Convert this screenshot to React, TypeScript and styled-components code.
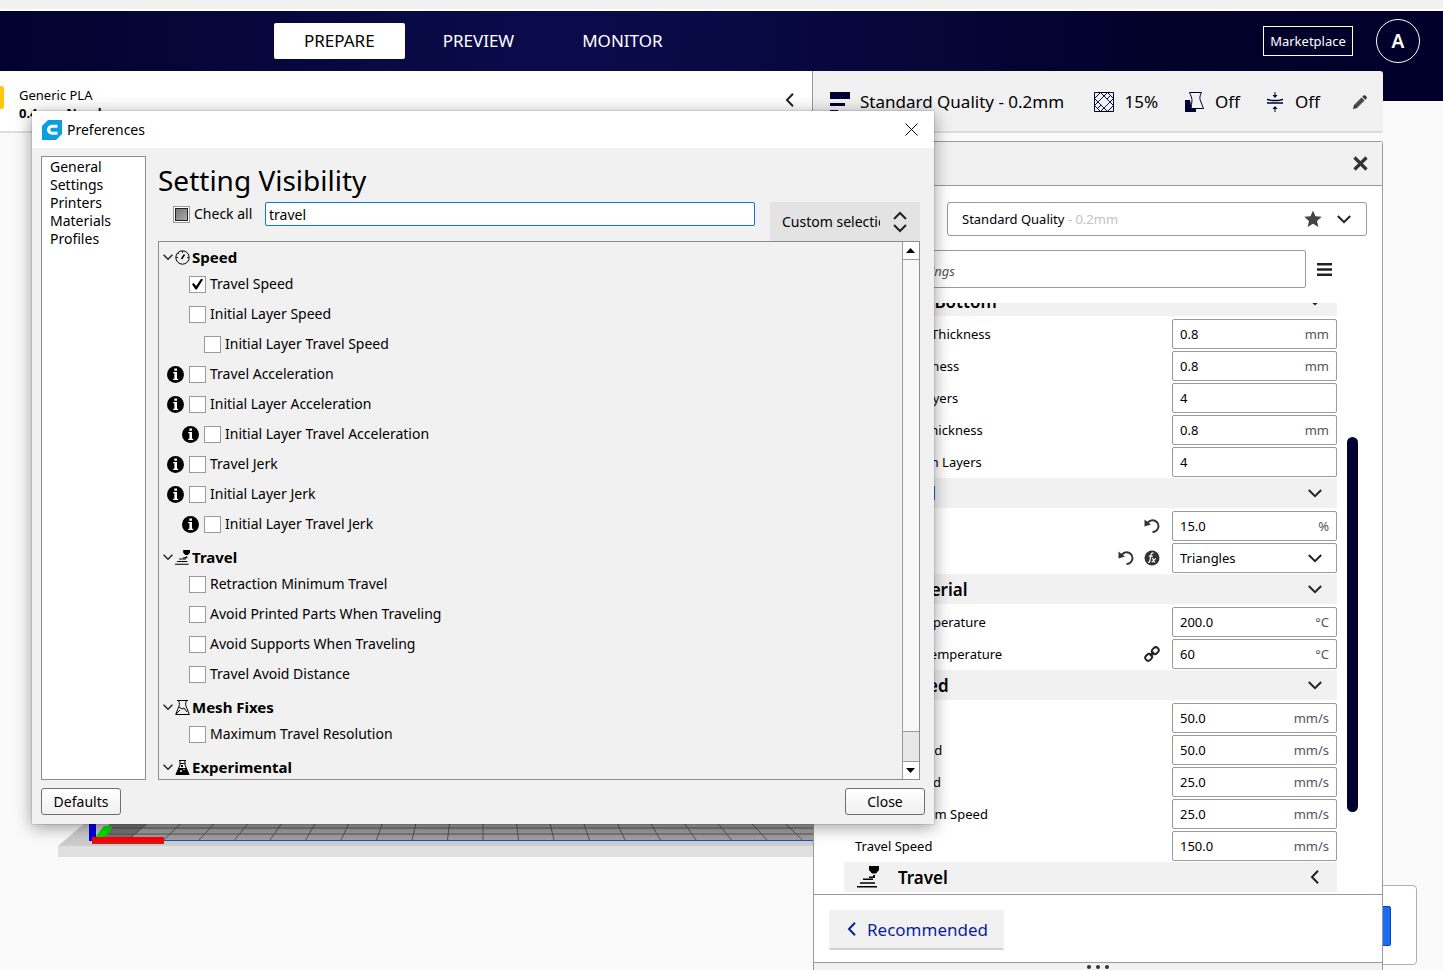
import React from "react";
import styled, { createGlobalStyle } from "styled-components";

const Global = createGlobalStyle`
  * { box-sizing: border-box; }
  html, body, #root { height: 100%; }
  body { margin: 0; overflow: hidden; background: #fafafa; color: #000; font: 13px/18px "Noto Sans", sans-serif; }
  button, input, select { font: inherit; color: inherit; margin: 0; }
  button { cursor: pointer; }
  svg { display: block; flex: none; }
`;

const NAVY = "#000033";
const LINE = "#9a9a9a";

const App_ = styled.div`
  position: relative;
  height: 100%;
  display: flex;
  flex-direction: column;
  overflow: hidden;
`;
const MenuStrip = styled.div`
  height: 11px;
  flex: none;
  background: #f1f1f1;
  border-bottom: 2px solid #fff;
`;
const Header = styled.header`
  height: 90px;
  flex: none;
  background: linear-gradient(90deg, #03032f 0%, #0b0b4c 38%, #0a0a48 46%, #02022b 80%, #00002a 100%);
`;
const TopNav = styled.div`
  height: 60px;
  display: flex;
  align-items: center;
  padding: 0 23px 0 274px;
`;
const Stages = styled.nav`
  display: flex;
  gap: 8px;
  flex: 1;
`;
const Stage = styled.button<{ $active?: boolean }>`
  height: 36px;
  padding: 0 30px;
  border: 0;
  border-radius: 2px;
  font-size: 17px;
  background: ${(p) => (p.$active ? "#fff" : "transparent")};
  color: ${(p) => (p.$active ? "#000" : "#fff")};
`;
const Marketplace = styled.button`
  width: 90px;
  height: 30px;
  padding: 0;
  border: 1px solid #fff;
  background: transparent;
  color: #fff;
`;
const Avatar = styled.button`
  width: 44px;
  height: 44px;
  margin-left: 23px;
  padding: 0;
  border: 1px solid #fff;
  border-radius: 50%;
  background: transparent;
  color: #fff;
  font-size: 19px;
  font-weight: 600;
`;
const StageBar = styled.div`
  display: flex;
  height: 62px;
  margin-right: 60px;
`;
const Materials = styled.section`
  flex: 1;
  display: flex;
  align-items: flex-start;
  background: #fff;
  border-bottom: 2px solid #dedede;
  padding-top: 15px;
`;
const Swatch = styled.span`
  width: 4px;
  height: 23px;
  margin-right: 15px;
  border-radius: 0 2px 2px 0;
  background: #ffc80a;
`;
const MaterialText = styled.div`
  flex: 1;
  strong { display: block; font-weight: 700; }
`;
const CollapseIcon = styled.span`
  padding: 7px 15px 0 0;
`;
const Summary = styled.section`
  width: 571px;
  flex: none;
  display: flex;
  align-items: center;
  padding: 1px 16px 0 17px;
  background: #f1f1f1;
  border-left: 1px solid ${LINE};
  border-bottom: 2px solid #dcdcdc;
  border-radius: 0 3px 3px 0;
  font-size: 17px;
`;
const SummaryItem = styled.div<{ $grow?: boolean; $end?: number }>`
  display: flex;
  align-items: center;
  gap: 10px;
  white-space: nowrap;
  flex: ${(p) => (p.$grow ? "1" : "none")};
  margin-right: ${(p) => p.$end ?? 0}px;
`;

const Viewport = styled.main`
  position: relative;
  flex: 1;
  min-height: 0;
  display: flex;
  justify-content: flex-end;
  padding: 40px 60px 0 0;
`;
const Plate = styled.svg`
  position: absolute;
  left: 58px;
  top: 709px;
`;
const ActionCard = styled.aside`
  position: absolute;
  right: 26px;
  top: 784px;
  width: 300px;
  height: 80px;
  padding: 20px 25px;
  background: #fff;
  border: 1px solid #b0b0b0;
  border-radius: 4px;
`;
const Slice = styled.button`
  width: 100%;
  height: 40px;
  border: 1px solid #0b3fc4;
  border-radius: 2px;
  background: #196ef0;
  color: #fff;
`;
const Panel = styled.section`
  position: relative;
  width: 570px;
  display: flex;
  flex-direction: column;
  background: #fff;
  border: 1px solid ${LINE};
  border-bottom: 0;
  border-radius: 3px 3px 0 0;
`;
const PanelHead = styled.div`
  height: 44px;
  flex: none;
  display: flex;
  align-items: center;
  justify-content: space-between;
  padding: 0 14px;
  background: #f1f1f1;
  border-bottom: 1px solid ${LINE};
  font-size: 14px;
`;
const IconButton = styled.button`
  padding: 0;
  border: 0;
  background: none;
`;
const ProfileRow = styled.div`
  display: flex;
  align-items: center;
  justify-content: space-between;
  padding: 16px 15px 0 30px;
`;
const ProfileBox = styled.button`
  width: 420px;
  height: 34px;
  display: flex;
  align-items: center;
  padding: 0 15px 0 14px;
  border: 1px solid ${LINE};
  border-radius: 3px;
  background: #fff;
  span { flex: 1; text-align: left; }
  em { font-style: normal; color: #c2c2c2; }
  svg + svg { margin-left: 15px; }
`;
const SearchRow = styled.div`
  display: flex;
  align-items: center;
  gap: 11px;
  padding: 14px 50px 15px 30px;
`;
const Search = styled.input`
  flex: 1;
  min-width: 0;
  height: 38px;
  padding: 4px 0 0 23px;
  border: 1px solid ${LINE};
  border-radius: 2px;
  background: #fff;
  &::placeholder { color: #555; font-style: italic; opacity: 1; }
`;
const Scroll = styled.div`
  height: 591px;
  flex: none;
  display: flex;
  overflow: hidden;
  padding: 0 24px 0 30px;
`;
const Settings = styled.div`
  flex: 1;
  margin-top: -17px;
`;
const Track = styled.div`
  width: 11px;
  margin-left: 10px;
  padding-top: 134px;
`;
const Thumb = styled.div`
  height: 375px;
  border-radius: 6px;
  background: ${NAVY};
`;
const CategoryBar = styled.button`
  width: 100%;
  height: 30px;
  margin-bottom: 2px;
  display: flex;
  align-items: center;
  padding: 0 15px 0 13px;
  border: 0;
  background: #f1f1f1;
  font-size: 17px;
  font-weight: 600;
`;
const CategoryIcon = styled.span`
  width: 41px;
`;
const CategoryName = styled.span`
  flex: 1;
  padding-top: 2px;
  text-align: left;
`;
const SettingRow = styled.div<{ $depth: number }>`
  height: 32px;
  display: flex;
  align-items: center;
  padding-left: ${(p) => 11 + p.$depth * 19}px;
  label { flex: 1; }
`;
const RowIcons = styled.span`
  display: flex;
  gap: 10px;
  margin-right: 12px;
`;
const Field = styled.span`
  width: 165px;
  height: 30px;
  display: flex;
  align-items: center;
  padding: 0 7px;
  border: 1px solid ${LINE};
  border-radius: 2px;
  background: #fff;
  span { color: #555; }
`;
const Value = styled.input`
  flex: 1;
  min-width: 0;
  padding: 0;
  border: 0;
  outline: 0;
  background: none;
`;
const PatternSelect = styled.select`
  flex: 1;
  padding: 0;
  border: 0;
  appearance: none;
  background: none;
`;
const PatternArrow = styled.span`
  padding-right: 7px;
`;
const PanelFoot = styled.div`
  height: 68px;
  flex: none;
  padding: 15px;
  border-top: 1px solid ${LINE};
`;
const Recommended = styled.button`
  height: 40px;
  display: flex;
  align-items: center;
  gap: 8px;
  padding: 0 16px;
  border: 0;
  border-bottom: 2px solid #d2d2d2;
  border-radius: 2px;
  background: #f1f1f1;
  color: #0a1f9c;
  font-size: 17px;
  span { padding-top: 2px; }
`;
const Grip = styled.div`
  flex: 1;
  display: flex;
  justify-content: center;
  gap: 5px;
  padding-top: 2px;
  border-top: 1px solid ${LINE};
  background: #f1f1f1;
  i { width: 4px; height: 4px; border-radius: 50%; background: #333; }
`;

const Dialog = styled.section`
  position: absolute;
  left: 32px;
  top: 111px;
  width: 902px;
  height: 713px;
  display: flex;
  flex-direction: column;
  background: #f1f1f1;
  box-shadow: 0 0 1px rgba(0, 0, 0, 0.5), 0 3px 16px rgba(0, 0, 0, 0.4);
  font-size: 14px;
`;
const TitleBar = styled.div`
  height: 37px;
  flex: none;
  display: flex;
  align-items: center;
  gap: 5px;
  padding: 0 16px 0 10px;
  background: #fff;
  span { flex: 1; }
`;
const DialogBody = styled.div`
  flex: 1;
  min-height: 0;
  display: flex;
  gap: 12px;
  padding: 8px 14px 0 9px;
`;
const Pages = styled.ul`
  width: 105px;
  margin: 0;
  padding: 1px 8px;
  list-style: none;
  border: 1px solid #8c8c8c;
  background: #fff;
  li { height: 18px; }
  a { color: inherit; text-decoration: none; }
`;
const Content = styled.div`
  flex: 1;
  min-width: 0;
  display: flex;
  flex-direction: column;
`;
const Title = styled.h1`
  margin: 0;
  height: 46px;
  font-size: 28px;
  line-height: 48px;
  font-weight: 400;
`;
const FilterRow = styled.div`
  height: 39px;
  display: flex;
  align-items: flex-start;
  padding-left: 15px;
`;
const CheckAll = styled.label`
  display: flex;
  align-items: center;
  gap: 4px;
  width: 92px;
  height: 24px;
`;
const Check = styled.input<{ $partial?: boolean }>`
  appearance: none;
  width: 17px;
  height: 17px;
  flex: none;
  display: grid;
  place-items: center;
  border: 1px solid ${LINE};
  background: #fff;
  &:checked::after {
    content: "";
    width: 11px;
    height: 11px;
    background: ${(p) => (p.$partial ? "linear-gradient(135deg, #777, #aaa)" : "#000")};
    border: ${(p) => (p.$partial ? "1px solid #222" : "0")};
    clip-path: ${(p) => (p.$partial ? "none" : "polygon(0 52%, 14% 42%, 38% 68%, 84% 0, 100% 8%, 44% 100%, 32% 100%)")};
  }
`;
const Filter = styled.input`
  flex: 1;
  min-width: 0;
  height: 24px;
  margin: 0 15px 0 0;
  padding: 0 3px;
  border: 1px solid #0a78d4;
  border-radius: 2px;
  outline: 0;
  background: #fff;
`;
const Preset = styled.span`
  position: relative;
  width: 150px;
  height: 39px;
  background: #e3e3e3;
  svg { position: absolute; right: 13px; top: 9px; pointer-events: none; }
`;
const PresetSelect = styled.select`
  width: 100%;
  height: 100%;
  padding: 0 40px 0 12px;
  border: 0;
  appearance: none;
  background: none;
`;
const ListBox = styled.div`
  flex: 1;
  min-height: 0;
  display: flex;
  border: 1px solid #8c8c8c;
`;
const Tree = styled.div`
  flex: 1;
  display: flex;
  flex-direction: column;
  gap: 6px;
  padding: 3px 0 0 4px;
  overflow: hidden;
`;
const TreeHead = styled.h2`
  height: 24px;
  display: flex;
  align-items: center;
  gap: 2px;
  margin: 0;
  font-size: 15px;
  font-weight: 700;
`;
const TreeItem = styled.label<{ $depth: number }>`
  height: 30px;
  display: flex;
  align-items: center;
  gap: 4px;
  padding-left: ${(p) => 4 + p.$depth * 15}px;
`;
const InfoSlot = styled.span`
  width: 18px;
`;
const ScrollBar = styled.div`
  width: 17px;
  display: flex;
  flex-direction: column;
  border-left: 1px solid ${LINE};
  background: #f8f8f8;
`;
const ScrollStep = styled.button`
  height: 17px;
  flex: none;
  display: grid;
  place-items: center;
  padding: 0 1px 0 0;
  border: 0;
  background: #fff;
`;
const ScrollTrack = styled.div`
  flex: 1;
  display: flex;
  align-items: flex-end;
  border: solid ${LINE};
  border-width: 1px 0;
`;
const ScrollThumb = styled.div`
  width: 100%;
  height: 30px;
  border-top: 1px solid ${LINE};
  background: #e8e8e8;
`;
const DialogFoot = styled.div`
  height: 44px;
  flex: none;
  display: flex;
  justify-content: space-between;
  padding: 8px 9px 9px;
`;
const Push = styled.button`
  width: 80px;
  height: 27px;
  padding: 0;
  border: 1px solid #6e6e6e;
  border-radius: 3px;
  background: linear-gradient(#fff, #f0f0f0);
`;

function Chevron({ dir = "down", w = 14, stroke = "#222" }: { dir?: "down" | "left"; w?: number; stroke?: string }) {
  return dir === "down" ? (
    <svg width={w} height={w} viewBox="0 0 14 14" fill="none" stroke={stroke} strokeWidth="2">
      <path d="M.8 4 7 10.200 13.200 4" />
    </svg>
  ) : (
    <svg width={w} height={w} viewBox="0 0 14 14" fill="none" stroke={stroke} strokeWidth="2">
      <path d="M10 .8 4 7l6 6.200" />
    </svg>
  );
}

const LayersIcon = () => (
  <svg width="20" height="21" viewBox="0 0 20 21" fill={NAVY}>
    <path d="M0 1h20v7H0zM0 12h15v3H0zM0 19h8v2H0z" />
  </svg>
);
const InfillIcon = () => (
  <svg width="20" height="20" viewBox="0 0 20 20" fill="none" stroke={NAVY}>
    <path d="M.5.5h19v19H.5z" />
    <path d="M0 7 7 0M3 17 17 3M0 14 14 0M6 20 20 6M13 20l7-7M13 0l7 7M6 0l14 14M0 6l14 14M0 13l7 7" strokeWidth="1" />
    <path d="M10 4.500 15.500 10 10 15.500 4.500 10z" fill="#f1f1f1" stroke="none" />
  </svg>
);
const SupportIcon = () => (
  <svg width="20" height="20" viewBox="0 0 20 20">
    <path d="M0 8h5l1 5 5 3v4H0z" fill={NAVY} />
    <path d="M4.500.5h12c-1 2-2 4-1.500 7l3.500 9H6c0-3 1-5 1-8 0-2-1-5-2.500-8z" fill="#f1f1f1" stroke={NAVY} />
  </svg>
);
const AdhesionIcon = () => (
  <svg width="18" height="20" viewBox="0 0 18 20" stroke={NAVY} fill={NAVY}>
    <path d="M8 0v4M8 20v-4" />
    <path d="M5.500 3h5L8 6zM5.500 17h5L8 14z" stroke="none" />
    <path d="M0 7.500c3 0 3 1 5 1h6c2 0 2-1 5-1M0 11h16" fill="none" strokeWidth="1.400" />
  </svg>
);
const PencilIcon = () => (
  <svg width="14" height="14" viewBox="0 0 14 14" fill="#333">
    <path d="M0 14l1-4 7.500-7.500 3 3L4 13zM9.300 1.700 10.500.6c.6-.6 1.300-.5 1.800 0l1.200 1.200c.5.5.5 1.200 0 1.700l-1.200 1.200z" />
    <path d="M2 10.500 8.700 4M3.700 12l6.500-6.500" stroke="#999" strokeWidth=".7" />
  </svg>
);
const CloseIcon = () => (
  <svg width="15" height="15" viewBox="0 0 15 15" stroke="#333" strokeWidth="3.200">
    <path d="M1.500 1.500l12 12M13.500 1.500l-12 12" />
  </svg>
);
const StarIcon = () => (
  <svg width="18" height="18" viewBox="0 0 18 18" fill="#444">
    <path d="M9 .5l2.500 5.700 6.200.6-4.700 4.100 1.400 6.100L9 13.800 3.600 17 5 10.900.3 6.800l6.200-.6z" />
  </svg>
);
const MenuIcon = () => (
  <svg width="15" height="13" viewBox="0 0 15 13" fill="#222">
    <path d="M0 0h15v2.500H0zM0 5.200h15v2.500H0zM0 10.400h15v2.500H0z" />
  </svg>
);
const UndoIcon = () => (
  <svg width="16" height="16" viewBox="0 0 16 16">
    <path d="M2.500 6.500C5 1.500 10 1.200 12.800 4c3.500 3.800 1 9.800-4.300 10" fill="none" stroke="#333" strokeWidth="1.900" />
    <path d="M.5 1.500v7l6.500-2z" fill="#333" />
  </svg>
);
const FormulaIcon = () => (
  <svg width="16" height="16" viewBox="0 0 16 16">
    <circle cx="8" cy="8" r="7.500" fill="#333" />
    <path d="M9.500 3.200c-1.500-.8-2.200.2-2.500 1.800L5.800 11c-.3 1.300-1 1.500-1.800 1.200M4.800 6.200h4M8 8.500c1.500-.5 1.500 4 3.200 3.500M11.700 8.300 7.700 12.300" fill="none" stroke="#fff" strokeWidth="1.200" />
  </svg>
);
const LinkIcon = () => (
  <svg width="16" height="16" viewBox="0 0 16 16" fill="none" stroke="#222" strokeWidth="1.900">
    <rect x="-3.600" y="-2.900" width="7.200" height="5.800" rx="2.900" transform="translate(4.700 11.300) rotate(-45)" />
    <rect x="-3.600" y="-2.900" width="7.200" height="5.800" rx="2.900" transform="translate(11.300 4.700) rotate(-45)" />
    <path d="M6 10l4-4" />
  </svg>
);
const TravelIcon = ({ size = 22 }: { size?: number }) => (
  <svg width={size} height={size} viewBox="0 0 22 22" fill="#000">
    <path d="M12 0h10v4l-3 3.500h-4L12 4zM16 9h2v3h-6v-1.400h4zM6 12.500h10V14H6zM3 16.300h15v1.400H3zM0 20h20v1.500H0z" />
  </svg>
);
const GaugeIcon = () => (
  <svg width="15" height="15" viewBox="0 0 15 15" fill="none" stroke="#000">
    <circle cx="7.500" cy="7.500" r="6.700" />
    <path d="M6.500 9 9.500 4.500" strokeWidth="1.500" />
    <path d="M7.500 1v2M3 3l1.200 1.200M1 7.500h2M12 7.500h2" strokeWidth=".8" />
  </svg>
);
const MeshIcon = () => (
  <svg width="15" height="15" viewBox="0 0 15 15" fill="none" stroke="#000">
    <path d="M2 .5h11M3.500.5c1.500 3 1 5-.5 8L.7 14.500h13.600L12 8.500c-1.500-3-2-5-.5-8M4 7l3 2 2-1 3 4M1 14l4-4" />
  </svg>
);
const FlaskIcon = () => (
  <svg width="15" height="15" viewBox="0 0 15 15">
    <path d="M4 .5h7M5 .5V5L1 14.500h13L10 5V.5M5 3.500h5" fill="none" stroke="#000" />
    <path d="M4 8h7l3.500 7H.5zM6 5h2v2H6z" fill="#000" />
    <circle cx="6" cy="11" r="1" fill="#fff" />
    <circle cx="9" cy="9.500" r=".7" fill="#fff" />
  </svg>
);
const InfoIcon = () => (
  <svg width="17" height="17" viewBox="0 0 17 17">
    <circle cx="8.500" cy="8.500" r="8.500" fill="#000" />
    <path d="M7.300 2.500h2.700v2.300H7.300zM6.200 6h3.800v6.700h1.200V14H6.200v-1.300h1.200V7.300H6.200z" fill="#fff" />
  </svg>
);
const CuraLogo = () => (
  <svg width="20" height="20" viewBox="0 0 20 20">
    <path d="M6 0h14v14l-6 6H0V6z" fill="#0a9fe0" />
    <path d="M15.500 4.700H10a5 5 0 0 0 0 10h5.500v-3H10.200a2 2 0 0 1 0-4h5.300z" fill="#fff" />
  </svg>
);

function BuildPlate() {
  const lines = Array.from({ length: 20 }, (_, i) => i - 10);
  return (
    <Plate width="780" height="48" viewBox="58 810 780 48">
      <path d="M58 846 100 810h738v36z" fill="#cdcdcd" />
      <path d="M58 846h780v11H58z" fill="#e0e0e0" />
      <path d="M92 840 128 810h710v30z" fill="#a0a0a0" />
      <path d="M110 824l4-4h36l-18 17h-36z" fill="#777" />
      <path d="M100 834h738M106 828h732" stroke="#555" />
      {lines.map((k) => (
        <path key={k} d={`M${483 + 35.5 * k} 840L${483 + 32 * k} 810`} stroke="#555" />
      ))}
      <path d="M92 840.500h746" stroke="#1450e0" />
      <path d="M89 810h7v31h-7z" fill="#0000e6" />
      <path d="M96 836l8-10h9l-6 9-9 4z" fill="#00e600" />
      <path d="M92 837h72v7H92z" fill="#c81e1e" />
      <path d="M92 837h72v5H92z" fill="#ff0000" />
    </Plate>
  );
}

type Setting = { name: string; value: string; unit?: string; depth?: number; icons?: React.ReactNode; select?: boolean };
type Category = { name: string; icon?: React.ReactNode; closed?: boolean; items: Setting[] };

const categories: Category[] = [
  {
    name: "Top/Bottom",
    items: [
      { name: "Top/Bottom Thickness", value: "0.8", unit: "mm" },
      { name: "Top Thickness", value: "0.8", unit: "mm", depth: 1 },
      { name: "Top Layers", value: "4", depth: 2 },
      { name: "Bottom Thickness", value: "0.8", unit: "mm", depth: 1 },
      { name: "Bottom Layers", value: "4", depth: 2 },
    ],
  },
  {
    name: "Infill",
    items: [
      { name: "Density", value: "15.0", unit: "%", icons: <UndoIcon /> },
      { name: "Pattern", value: "Triangles", select: true, icons: <><UndoIcon /><FormulaIcon /></> },
    ],
  },
  {
    name: "Material",
    items: [
      { name: "Printing Temperature", value: "200.0", unit: "°C" },
      { name: "Build Plate Temperature", value: "60", unit: "°C", icons: <LinkIcon /> },
    ],
  },
  {
    name: "Speed",
    items: [
      { name: "Speed", value: "50.0", unit: "mm/s" },
      { name: "Infill Speed", value: "50.0", unit: "mm/s", depth: 1 },
      { name: "Wall Speed", value: "25.0", unit: "mm/s", depth: 1 },
      { name: "Top/Bottom Speed", value: "25.0", unit: "mm/s", depth: 1 },
      { name: "Travel Speed", value: "150.0", unit: "mm/s" },
    ],
  },
  { name: "Travel", icon: <TravelIcon />, closed: true, items: [] },
];

type Entry = { name: string; depth?: number; info?: boolean; on?: boolean };
const groups: { name: string; icon: React.ReactNode; entries: Entry[] }[] = [
  {
    name: "Speed",
    icon: <GaugeIcon />,
    entries: [
      { name: "Travel Speed", on: true },
      { name: "Initial Layer Speed" },
      { name: "Initial Layer Travel Speed", depth: 1 },
      { name: "Travel Acceleration", info: true },
      { name: "Initial Layer Acceleration", info: true },
      { name: "Initial Layer Travel Acceleration", info: true, depth: 1 },
      { name: "Travel Jerk", info: true },
      { name: "Initial Layer Jerk", info: true },
      { name: "Initial Layer Travel Jerk", info: true, depth: 1 },
    ],
  },
  {
    name: "Travel",
    icon: <TravelIcon size={15} />,
    entries: [
      { name: "Retraction Minimum Travel" },
      { name: "Avoid Printed Parts When Traveling" },
      { name: "Avoid Supports When Traveling" },
      { name: "Travel Avoid Distance" },
    ],
  },
  { name: "Mesh Fixes", icon: <MeshIcon />, entries: [{ name: "Maximum Travel Resolution" }] },
  { name: "Experimental", icon: <FlaskIcon />, entries: [] },
];

const idOf = (s: string) => s.toLowerCase().replace(/[^a-z]+/g, "-");

function SettingsPanel() {
  return (
    <Panel>
      <PanelHead>
        <span>Print settings</span>
        <IconButton aria-label="Close print settings"><CloseIcon /></IconButton>
      </PanelHead>
      <ProfileRow>
        <span>Profile</span>
        <ProfileBox>
          <span>Standard Quality <em>- 0.2mm</em></span>
          <StarIcon />
          <Chevron />
        </ProfileBox>
      </ProfileRow>
      <SearchRow>
        <Search placeholder="Search settings" aria-label="Search settings" />
        <IconButton aria-label="Setting visibility menu"><MenuIcon /></IconButton>
      </SearchRow>
      <Scroll>
        <Settings>
          {categories.map((c) => (
            <div key={c.name}>
              <CategoryBar>
                <CategoryIcon>{c.icon}</CategoryIcon>
                <CategoryName>{c.name}</CategoryName>
                <Chevron dir={c.closed ? "left" : "down"} />
              </CategoryBar>
              {c.items.map((s) => (
                <SettingRow key={s.name} $depth={s.depth ?? 0}>
                  <label htmlFor={idOf(s.name)}>{s.name}</label>
                  {s.icons && <RowIcons>{s.icons}</RowIcons>}
                  <Field>
                    {s.select ? (
                      <>
                        <PatternSelect id={idOf(s.name)}><option>{s.value}</option></PatternSelect>
                        <PatternArrow><Chevron /></PatternArrow>
                      </>
                    ) : (
                      <>
                        <Value id={idOf(s.name)} defaultValue={s.value} />
                        {s.unit && <span>{s.unit}</span>}
                      </>
                    )}
                  </Field>
                </SettingRow>
              ))}
            </div>
          ))}
        </Settings>
        <Track><Thumb /></Track>
      </Scroll>
      <PanelFoot>
        <Recommended><Chevron dir="left" stroke="#0a1f9c" /><span>Recommended</span></Recommended>
      </PanelFoot>
      <Grip><i /><i /><i /></Grip>
    </Panel>
  );
}

function Preferences() {
  return (
    <Dialog role="dialog" aria-label="Preferences">
      <TitleBar>
        <CuraLogo />
        <span>Preferences</span>
        <IconButton aria-label="Close window">
          <svg width="13" height="13" viewBox="0 0 13 13" stroke="#000"><path d="M.5.5l12 12M12.500.5l-12 12" /></svg>
        </IconButton>
      </TitleBar>
      <DialogBody>
        <Pages>
          {["General", "Settings", "Printers", "Materials", "Profiles"].map((p) => (
            <li key={p}><a href={"#" + p.toLowerCase()}>{p}</a></li>
          ))}
        </Pages>
        <Content>
          <Title>Setting Visibility</Title>
          <FilterRow>
            <CheckAll><Check type="checkbox" $partial defaultChecked />Check all</CheckAll>
            <Filter defaultValue="travel" aria-label="Filter settings" />
            <Preset>
              <PresetSelect aria-label="Visibility preset"><option>Custom selection</option></PresetSelect>
              <svg width="14" height="22" viewBox="0 0 14 22" fill="none" stroke="#222" strokeWidth="2">
                <path d="M1 8l6-6 6 6M1 14l6 6 6-6" />
              </svg>
            </Preset>
          </FilterRow>
          <ListBox>
            <Tree>
              {groups.map((g) => (
                <div key={g.name}>
                  <TreeHead>
                    <Chevron w={10} />
                    {g.icon}
                    {g.name}
                  </TreeHead>
                  {g.entries.map((e) => (
                    <TreeItem key={e.name} $depth={e.depth ?? 0}>
                      <InfoSlot>{e.info && <InfoIcon />}</InfoSlot>
                      <Check type="checkbox" defaultChecked={e.on} />
                      {e.name}
                    </TreeItem>
                  ))}
                </div>
              ))}
            </Tree>
            <ScrollBar>
              <ScrollStep aria-label="Scroll up">
                <svg width="9" height="5" viewBox="0 0 9 5"><path d="M0 5 4.500 0 9 5z" /></svg>
              </ScrollStep>
              <ScrollTrack><ScrollThumb /></ScrollTrack>
              <ScrollStep aria-label="Scroll down">
                <svg width="9" height="5" viewBox="0 0 9 5"><path d="M0 0l4.500 5L9 0z" /></svg>
              </ScrollStep>
            </ScrollBar>
          </ListBox>
        </Content>
      </DialogBody>
      <DialogFoot>
        <Push>Defaults</Push>
        <Push>Close</Push>
      </DialogFoot>
    </Dialog>
  );
}

export default function App() {
  return (
    <App_>
      <Global />
      <MenuStrip />
      <Header>
        <TopNav>
          <Stages>
            <Stage $active>PREPARE</Stage>
            <Stage>PREVIEW</Stage>
            <Stage>MONITOR</Stage>
          </Stages>
          <Marketplace>Marketplace</Marketplace>
          <Avatar>A</Avatar>
        </TopNav>
        <StageBar>
          <Materials>
            <Swatch />
            <MaterialText>Generic PLA<strong>0.4mm Nozzle</strong></MaterialText>
            <CollapseIcon><Chevron dir="left" /></CollapseIcon>
          </Materials>
          <Summary>
            <SummaryItem $grow><LayersIcon />Standard Quality - 0.2mm</SummaryItem>
            <SummaryItem $end={27}><InfillIcon />15%</SummaryItem>
            <SummaryItem $end={27}><SupportIcon />Off</SummaryItem>
            <SummaryItem $end={33}><AdhesionIcon />Off</SummaryItem>
            <IconButton aria-label="Edit print settings"><PencilIcon /></IconButton>
          </Summary>
        </StageBar>
      </Header>
      <Viewport>
        <BuildPlate />
        <ActionCard><Slice>Slice</Slice></ActionCard>
        <SettingsPanel />
      </Viewport>
      <Preferences />
    </App_>
  );
}
